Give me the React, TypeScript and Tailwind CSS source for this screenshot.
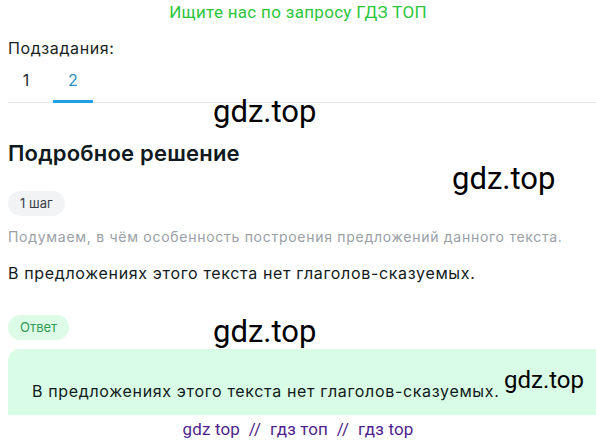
import React from 'react';

const Watermark: React.FC<{ className: string }> = ({ className }) => (
  <span className={`absolute font-['Roboto',sans-serif] text-black leading-none pointer-events-none ${className}`}>
    gdz.top
  </span>
);

export default function App() {
  return (
    <div className="relative w-[596px] h-[443px] overflow-hidden bg-white font-['Inter',sans-serif]">
      {/* Top banner */}
      <p className="text-center text-[17px] leading-[24px] tracking-[0.3px] text-[#2cc63b] font-['Roboto',sans-serif]">
        Ищите нас по запросу ГДЗ ТОП
      </p>

      <div className="pl-2">
        <p className="mt-3 text-[16px] leading-[24px] tracking-[0.6px] text-[#1a1f24]">Подзадания:</p>

        {/* Tabs */}
        <div className="flex gap-[7px] border-b border-[#e5e7eb]">
          <div className="ml-[-2px] w-10 pt-2 pb-[10px] text-center text-[16px] leading-[24px] text-[#1f2a30]">1</div>
          <div className="w-10 pt-2 pb-[7px] -mb-px border-b-[3px] border-[#1ea1e4] text-center text-[16px] leading-[24px] text-[#2b8cc4]">
            2
          </div>
        </div>

        <h2 className="mt-9 text-[22px] leading-[28px] tracking-[0.2px] font-semibold text-[#0f1a20]">Подробное решение</h2>

        <span className="mt-6 inline-block rounded-full bg-[#f1f3f5] px-3 text-[13px] leading-[25px] text-[#3a4148]">
          1 шаг
        </span>

        <p className="mt-[10px] text-[14px] leading-[22px] tracking-[0.72px] text-[#9aa0a6]">
          Подумаем, в чём особенность построения предложений данного текста.
        </p>

        <p className="mt-[13px] text-[16px] leading-[24px] tracking-[0.66px] text-[#111a20]">
          В предложениях этого текста нет глаголов-сказуемых.
        </p>

        <span className="mt-[30px] inline-block rounded-full bg-[#dcfce7] px-3 text-[13px] leading-[25px] text-[#2f9a55]">
          Ответ
        </span>

        <div className="mt-[9px] rounded-l-xl bg-[#d9fce6] pl-6 pt-[30px] pb-[30px]">
          <p className="text-[16px] leading-[24px] tracking-[0.66px] text-[#111a20]">
            В предложениях этого текста нет глаголов-сказуемых.
          </p>
        </div>
      </div>

      {/* Bottom strip */}
      <div className="absolute bottom-0 left-0 right-0 h-[28px] bg-white text-center font-['Roboto',sans-serif] text-[17px] leading-[28px] tracking-[0.15px] text-[#4f1f8c]">
        gdz top&nbsp; //&nbsp; гдз топ&nbsp; //&nbsp; гдз top
      </div>

      {/* Watermarks */}
      <Watermark className="left-[213px] top-[96px] text-[31px]" />
      <Watermark className="left-[452px] top-[163px] text-[31px]" />
      <Watermark className="left-[213px] top-[316px] text-[31px]" />
      <Watermark className="left-[504px] top-[368px] text-[24px]" />
    </div>
  );
}
